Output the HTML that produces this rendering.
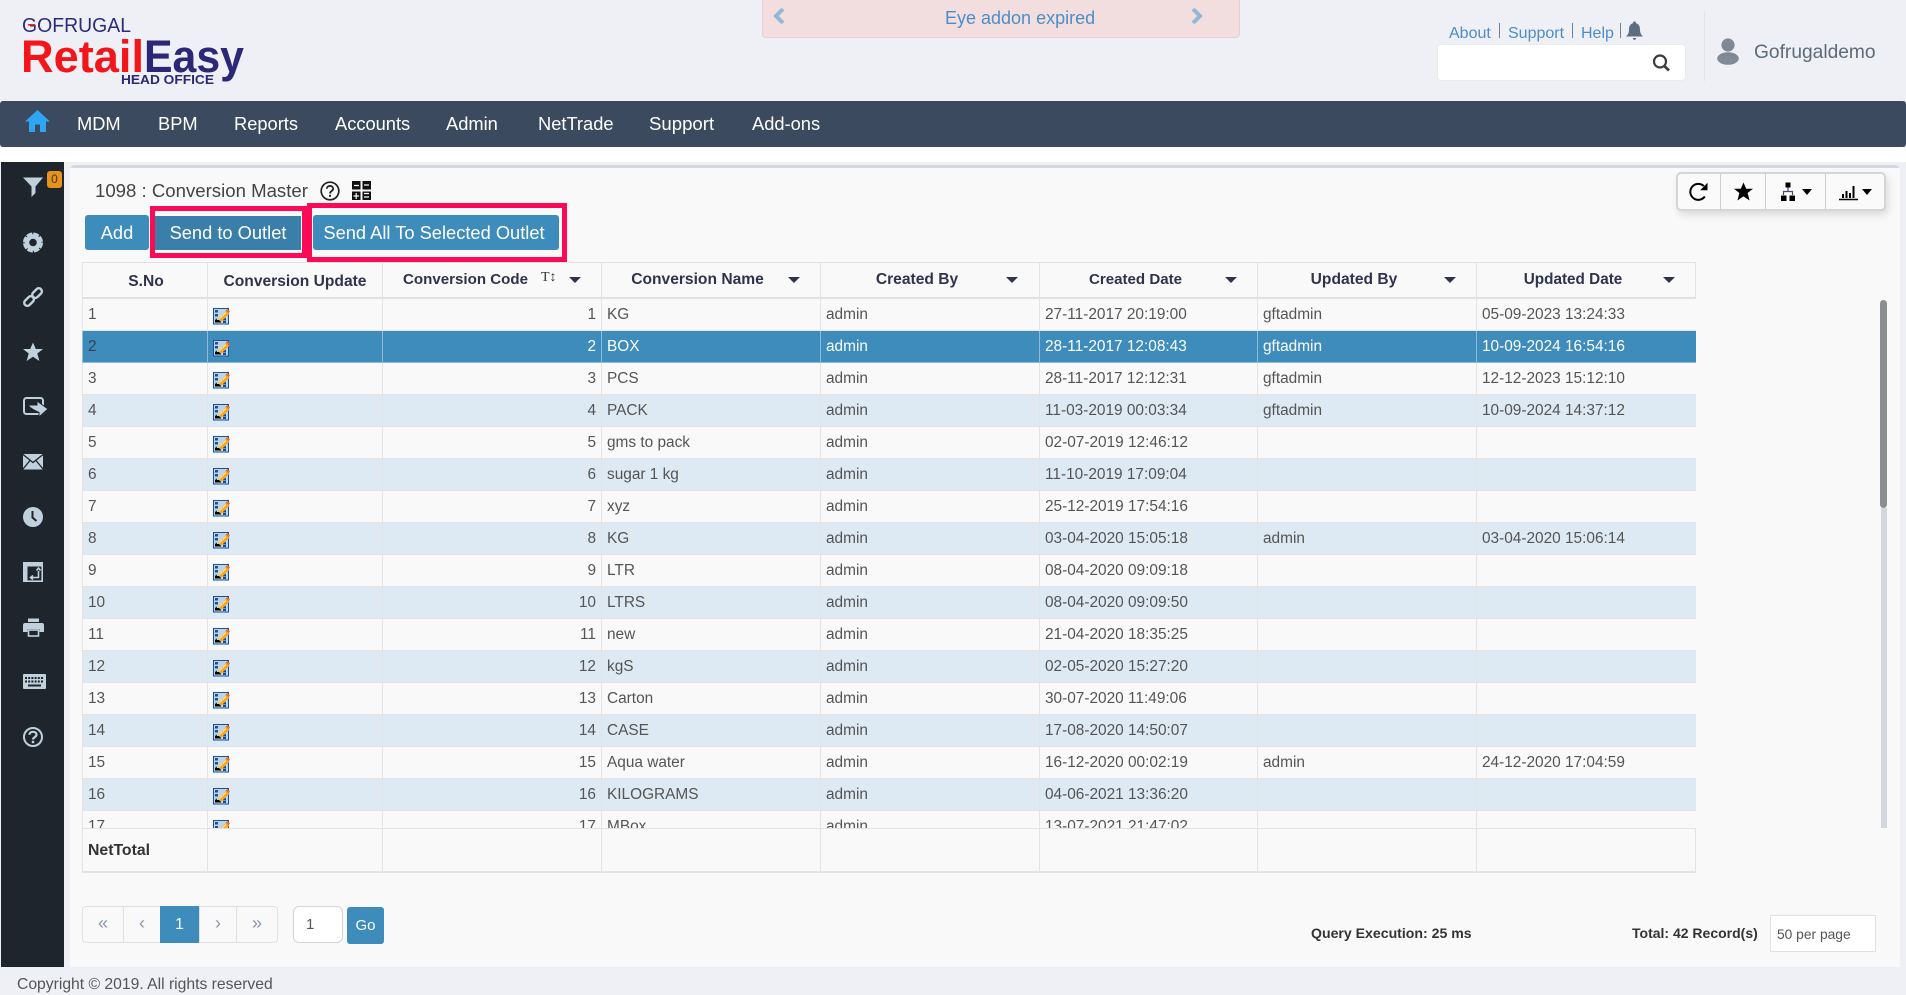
<!DOCTYPE html>
<html><head><meta charset="utf-8"><title>Conversion Master</title>
<style>
html,body{margin:0;padding:0;width:1906px;height:995px;overflow:hidden;background:#eff0f5;font-family:"Liberation Sans",sans-serif;color:#555}
.a{position:absolute}
.t{position:absolute;white-space:nowrap}
svg{position:absolute;display:block;overflow:visible}
.nav{left:0;top:101px;width:1906px;height:46px;background:#3c4a5f;border-radius:3px}
.m{top:101px;height:46px;line-height:46px;font-size:18.3px;color:#fff}
.btn{background:#3d8cbc;color:#fff;font-size:18.3px;text-align:center;border-radius:3px;top:215px;height:35px;line-height:36px}
.hl{border:5px solid #fb0a55;box-sizing:border-box}
.th{top:262px;height:36px;line-height:35px;font-size:15.6px;font-weight:bold;color:#30334c;text-align:center;white-space:nowrap}
.v{width:1px;background:#e3e3e3}
#wrap{left:82px;top:299px;width:1614px;height:529px;overflow:hidden}
table{border-collapse:collapse;table-layout:fixed;width:1614px}
td{height:30px;padding:1px 5px 0;border:1px solid #e4e4e4;border-top:0;font-size:15.4px;line-height:30px;white-space:nowrap;overflow:hidden;color:#555;box-sizing:content-box}
tr:nth-child(even) td{background:#dde9f3}
tr:nth-child(odd) td{background:#f9f9f9}
tr.s td{background:#3d8cbc;color:#fff;border-color:#8fbbd6}
tr.s td:first-child{color:#3b3f4a}
td.r{text-align:right}
td.i{padding:1px 0 0;position:relative}
.arr{width:0;height:0;border-left:6px solid transparent;border-right:6px solid transparent;border-top:6px solid #30334c;top:277px}
.pg{top:906px;height:37px;box-sizing:border-box;border:1px solid #e0e0e0;text-align:center;line-height:33px;font-size:18px;color:#8a97a6;background:#f9f9f9}
.ti{top:172px;height:39px}
.sb{left:23px;width:20px;height:20px}
</style></head><body>
<svg width="0" height="0" style="position:absolute"><defs>
<g id="e">
<rect x="0.5" y="0.5" width="15" height="15.5" fill="#bcd4ec" stroke="#1c4f93"/>
<rect x="2" y="2" width="3" height="2.5" fill="#1c4f93"/><rect x="2" y="6" width="3" height="2.5" fill="#1c4f93"/><rect x="10" y="10" width="3" height="2.5" fill="#1c4f93"/><rect x="10" y="13" width="3" height="2" fill="#1c4f93"/>
<path d="M3 10L5 14H2Z" fill="#000"/><rect x="2" y="12" width="6" height="2.5" fill="#000"/>
<path d="M5 11L13 3L16.5 5.5L8 14Z" fill="#f5a623"/><path d="M12.5 2.5L14.5 1L17 3.5L15.5 5Z" fill="#ee6a2f"/><path d="M6 11L13 4.5" stroke="#ffe28a" stroke-width="1.2"/>
</g>
</defs></svg>

<!-- logo -->
<svg class="a" style="left:0;top:0" width="260" height="100">
<text x="22" y="32" font-family="Liberation Sans" font-size="20.5" fill="#2f2a78" textLength="109" lengthAdjust="spacingAndGlyphs">GOFRUGAL</text>
<rect x="28" y="24" width="7" height="1.6" fill="#e8202a"/>
<text x="21" y="72" font-family="Liberation Sans" font-weight="bold" font-size="45" fill="#f2161b" textLength="123" lengthAdjust="spacingAndGlyphs">Retail</text>
<text x="144" y="72" font-family="Liberation Sans" font-weight="bold" font-size="45" fill="#2d2778" textLength="100" lengthAdjust="spacingAndGlyphs">Easy</text>
<text x="121" y="84" font-family="Liberation Sans" font-weight="bold" font-size="12.5" fill="#2d2778" textLength="93" lengthAdjust="spacingAndGlyphs">HEAD OFFICE</text>
</svg>

<!-- eye addon -->
<div class="a" style="left:762px;top:-4px;width:478px;height:42px;box-sizing:border-box;background:#f2dede;border:1px solid #ebccd1;border-radius:4px"></div>
<div class="t" style="left:945px;top:4px;height:28px;line-height:28px;width:150px;text-align:center;font-size:18px;color:#4d8dc8">Eye addon expired</div>
<svg style="left:772px;top:7px" width="14" height="18"><path d="M11 2L4 9L11 16" fill="none" stroke="#8fb8d9" stroke-width="4"/></svg>
<svg style="left:1190px;top:7px" width="14" height="18"><path d="M3 2L10 9L3 16" fill="none" stroke="#8fb8d9" stroke-width="4"/></svg>

<!-- top right -->
<div class="t" style="left:1449px;top:24px;font-size:16px;line-height:20px;color:#4d8dc8">About</div>
<div class="a" style="left:1499px;top:23px;width:1px;height:15px;background:#6d8296"></div>
<div class="t" style="left:1508px;top:24px;font-size:16px;line-height:20px;color:#4d8dc8">Support</div>
<div class="a" style="left:1572px;top:23px;width:1px;height:15px;background:#6d8296"></div>
<div class="t" style="left:1581px;top:24px;font-size:16px;line-height:20px;color:#4d8dc8">Help</div>
<div class="a" style="left:1620px;top:23px;width:1px;height:15px;background:#6d8296"></div>
<svg style="left:1626px;top:21px" width="17" height="20"><path d="M8.5 0.5C9.8 0.5 10 1.5 10 2.2C13 3 14 5.5 14 8.5C14 12 15 13.5 17 15.5H0C2 13.5 3 12 3 8.5C3 5.5 4 3 7 2.2C7 1.5 7.2 0.5 8.5 0.5ZM6.8 17H10.2C10 19.5 7 19.5 6.8 17Z" fill="#5c6f82"/></svg>
<div class="a" style="left:1437px;top:44px;width:249px;height:37px;box-sizing:border-box;background:#fff;border:1px solid #e9ebf0;border-radius:4px"></div>
<svg style="left:1652px;top:54px" width="20" height="18"><circle cx="8" cy="7.5" r="6" fill="none" stroke="#3a3d42" stroke-width="2.2"/><path d="M12.3 12L17 16.5" stroke="#3a3d42" stroke-width="2.8"/></svg>
<div class="a" style="left:1704px;top:12px;width:1px;height:69px;background:#e2e4ea"></div>
<svg style="left:1717px;top:37px" width="22" height="28"><circle cx="11" cy="8" r="6.6" fill="#808a96"/><ellipse cx="11" cy="21.5" rx="10.8" ry="6.3" fill="#808a96"/></svg>
<div class="t" style="left:1754px;top:40px;font-size:19.2px;line-height:25px;color:#5b6b7b">Gofrugaldemo</div>

<!-- nav -->
<div class="a nav"></div>
<svg style="left:25px;top:110px" width="25" height="23"><path d="M12.5 0L25 11.5H21V22H15V14.5H10V22H4V11.5H0Z" fill="#2ea6f4"/></svg>
<div class="t m" style="left:77px">MDM</div>
<div class="t m" style="left:158px">BPM</div>
<div class="t m" style="left:234px">Reports</div>
<div class="t m" style="left:335px">Accounts</div>
<div class="t m" style="left:446px">Admin</div>
<div class="t m" style="left:538px">NetTrade</div>
<div class="t m" style="left:649px;font-size:18.6px">Support</div>
<div class="t m" style="left:752px">Add-ons</div>

<!-- white band -->
<div class="a" style="left:0;top:147px;width:1906px;height:15px;background:#fff"></div>

<!-- sidebar -->
<div class="a" style="left:1px;top:162px;width:63px;height:805px;background:#1e252c"></div>
<div class="a" style="left:64px;top:162px;width:1842px;height:6px;background:#eef0f4"></div>
<div class="a" style="left:70px;top:165px;width:1830px;height:802px;background:#d4d8e0;border-radius:5px 5px 0 0"></div>
<div class="a" style="left:70px;top:168px;width:1830px;height:799px;background:#f9f9f9"></div>

<svg class="sb" style="top:177px" viewBox="0 0 20 20"><path d="M0 0.5H20L12.5 9.5V16L8.5 20V9.5Z" fill="#c0d0dc"/></svg>
<div class="a" style="left:47px;top:171px;width:15px;height:17px;background:#e6921e;border-radius:3px;color:#4a3410;font-size:12px;line-height:17px;text-align:center">0</div>
<svg class="sb" style="top:232px" viewBox="0 0 20 20"><circle cx="10" cy="10.5" r="6" fill="none" stroke="#c0d0dc" stroke-width="4.4"/><circle cx="10" cy="10.5" r="8.4" fill="none" stroke="#c0d0dc" stroke-width="3.2" stroke-dasharray="5.6 1"/></svg>
<svg class="sb" style="top:287px" viewBox="0 0 20 20"><g fill="none" stroke="#c0d0dc" stroke-width="2.4"><rect x="-5.5" y="-3" width="11" height="6.2" rx="3" transform="translate(14 6) rotate(-45)"/><rect x="-5.5" y="-3" width="11" height="6.2" rx="3" transform="translate(6 14) rotate(-45)"/></g></svg>
<svg class="sb" style="top:342px" viewBox="0 0 20 20"><path d="M10 0.5L12.8 7H20L14.3 11.5L16.4 19L10 14.8L3.6 19L5.7 11.5L0 7H7.2Z" fill="#c0d0dc"/></svg>
<svg class="sb" style="top:397px;width:25px" viewBox="0 0 25 20"><rect x="1" y="1" width="19" height="16" rx="2.5" fill="none" stroke="#c0d0dc" stroke-width="2"/><path d="M5 8H14V4L25 12L16 20V15.5C11 13 8 12 5 8Z" fill="#c0d0dc" stroke="#1e252c" stroke-width="1"/></svg>
<svg class="sb" style="top:452px" viewBox="0 0 20 20"><rect y="2" width="20" height="15.5" rx="1" fill="#c0d0dc"/><path d="M0 2.5L10 10.5L20 2.5M0 17L7 8.5M20 17L13 8.5" fill="none" stroke="#1e252c" stroke-width="1.3"/></svg>
<svg class="sb" style="top:507px" viewBox="0 0 20 20"><circle cx="10" cy="10" r="10" fill="#c0d0dc"/><path d="M9.5 4V10.5L13.5 14" fill="none" stroke="#1e252c" stroke-width="2"/></svg>
<svg class="sb" style="top:562px" viewBox="0 0 20 20"><rect x="0.8" y="0.8" width="18.4" height="18.4" fill="none" stroke="#c0d0dc" stroke-width="1.6"/><rect x="1" y="1" width="18" height="3.5" fill="#c0d0dc"/><rect x="1" y="4" width="3.5" height="15" fill="#c0d0dc"/><path d="M15.5 9V15.5H8M13.5 8.5L15.5 6L17.5 8.5M10 13.5L7.5 15.5L10 17.5" fill="none" stroke="#c0d0dc" stroke-width="1.6"/></svg>
<svg class="sb" style="top:617px;width:21px" viewBox="0 0 21 20"><rect x="5" y="1.5" width="11" height="3.5" fill="#c0d0dc"/><path d="M2 6H19Q21 6 21 8.5V15H16.5V12H4.5V15H0V8.5Q0 6 2 6Z" fill="#c0d0dc"/><rect x="5.5" y="13" width="10" height="6" fill="none" stroke="#c0d0dc" stroke-width="1.6"/></svg>
<svg class="sb" style="top:672px;width:23px" viewBox="0 0 23 20"><rect y="2" width="23" height="15" rx="1" fill="#c0d0dc"/><path d="M2 6H21M2 9.5H21" stroke="#1e252c" stroke-width="2" stroke-dasharray="2 1.2"/><path d="M5 13.5H18" stroke="#1e252c" stroke-width="2"/></svg>
<svg class="sb" style="top:727px" viewBox="0 0 20 20"><circle cx="10" cy="10" r="9" fill="none" stroke="#c0d0dc" stroke-width="2"/><path d="M6.5 7.8C6.5 3.8 13.5 3.8 13.5 7.8C13.5 10.3 10 10 10 12.5" fill="none" stroke="#c0d0dc" stroke-width="2.2"/><rect x="8.8" y="13.8" width="2.4" height="2.4" fill="#c0d0dc"/></svg>

<!-- title -->
<div class="t" style="left:95px;top:178px;font-size:18.6px;line-height:25px;color:#444">1098 : Conversion Master</div>
<svg style="left:320px;top:181px" width="20" height="20"><circle cx="10" cy="10" r="8.8" fill="none" stroke="#222" stroke-width="1.7"/><path d="M6.8 7.8C6.8 4 13.2 4 13.2 7.8C13.2 10 10 10 10 12.5" fill="none" stroke="#222" stroke-width="1.8"/><rect x="9" y="13.8" width="2" height="2" fill="#222"/></svg>
<svg style="left:352px;top:181px" width="19" height="19"><rect x="0" y="0" width="8.5" height="8.5" fill="#111"/><rect x="10.5" y="0" width="8.5" height="8.5" fill="#111"/><rect x="0" y="10.5" width="8.5" height="8.5" fill="#111"/><rect x="10.5" y="10.5" width="8.5" height="8.5" fill="#111"/><path d="M2 4.5H7M12 4H17M12 12.5H17M12 16H17M4.2 12V18M1.5 15H7" stroke="#fff" stroke-width="1.2"/></svg>

<!-- buttons -->
<div class="a btn" style="left:85px;width:64px">Add</div>
<div class="a hl" style="left:150px;top:206px;width:157px;height:52px"></div>
<div class="a btn" style="left:155px;width:146px;background:#3a7fa9;border-radius:0;border-top:1px solid #fff;height:34px;line-height:34px">Send to Outlet</div>
<div class="a hl" style="left:307px;top:203px;width:260px;height:59px"></div>
<div class="a btn" style="left:313px;width:246px;text-indent:-4px">Send All To Selected Outlet</div>

<!-- toolbar -->
<div class="a" style="left:1676px;top:172px;width:210px;height:39px;box-sizing:border-box;background:#fafafa;border:2px solid #d5d5d5;border-radius:5px;box-shadow:2px 4px 8px rgba(0,0,0,.12)"></div>
<div class="a" style="left:1720px;top:173px;width:1px;height:37px;background:#d0d0d0"></div>
<div class="a" style="left:1765px;top:173px;width:1px;height:37px;background:#d0d0d0"></div>
<div class="a" style="left:1825px;top:173px;width:1px;height:37px;background:#d0d0d0"></div>
<svg style="left:1689px;top:182px" width="20" height="20"><path d="M15.8 14.5A8 8 0 1 1 14.8 4" fill="none" stroke="#000" stroke-width="2"/><path d="M18.5 0.8V8.2H11.2Z" fill="#000"/></svg>
<svg style="left:1734px;top:182px" width="19" height="19"><path d="M9.5 0.5L12.2 6.8H19L13.6 11L15.6 18.5L9.5 14.4L3.4 18.5L5.4 11L0 6.8H6.8Z" fill="#000"/></svg>
<svg style="left:1781px;top:182px" width="14" height="20"><rect x="4.5" y="0.5" width="5" height="5" fill="#000"/><path d="M7 5.5V9M2.5 13V9.5H11.5V13" fill="none" stroke="#4b4b6b" stroke-width="1.2"/><rect x="0" y="13.5" width="5.5" height="5.5" fill="#000"/><rect x="8.5" y="13.5" width="5.5" height="5.5" fill="#000"/></svg>
<div class="a" style="left:1802px;top:189px;width:0;height:0;border-left:5.5px solid transparent;border-right:5.5px solid transparent;border-top:6px solid #000"></div>
<svg style="left:1839px;top:184px" width="19" height="17"><path d="M0 15.5H19" stroke="#000" stroke-width="1.6"/><rect x="3" y="10" width="2" height="4" fill="#000"/><rect x="6.5" y="7" width="2" height="7" fill="#000"/><rect x="10" y="9" width="2" height="5" fill="#000"/><rect x="13.5" y="2" width="2" height="12" fill="#000"/></svg>
<div class="a" style="left:1862px;top:189px;width:0;height:0;border-left:5.5px solid transparent;border-right:5.5px solid transparent;border-top:6px solid #000"></div>

<!-- table header -->
<div class="a" style="left:82px;top:262px;width:1614px;height:37px;box-sizing:border-box;border:1px solid #e3e3e3;border-bottom:2px solid #e0e0e0"></div>
<div class="a v" style="left:207px;top:262px;height:37px"></div>
<div class="a v" style="left:382px;top:262px;height:37px"></div>
<div class="a v" style="left:601px;top:262px;height:37px"></div>
<div class="a v" style="left:820px;top:262px;height:37px"></div>
<div class="a v" style="left:1039px;top:262px;height:37px"></div>
<div class="a v" style="left:1257px;top:262px;height:37px"></div>
<div class="a v" style="left:1476px;top:262px;height:37px"></div>
<div class="a th" style="left:83px;width:124px;top:264px;text-indent:2px">S.No</div>
<div class="a th" style="left:208px;width:174px;top:264px">Conversion Update</div>
<div class="a th" style="left:402px;width:127px;font-size:15.1px">Conversion Code</div>
<div class="a th" style="left:600px;width:195px">Conversion Name</div>
<div class="a th" style="left:820px;width:194px">Created By</div>
<div class="a th" style="left:1040px;width:191px;font-size:15.1px">Created Date</div>
<div class="a th" style="left:1258px;width:192px">Updated By</div>
<div class="a th" style="left:1477px;width:192px;font-size:15.3px">Updated Date</div>
<div class="t" style="left:541px;top:268px;font-size:14px;line-height:20px;font-family:'Liberation Serif',serif;color:#333">T↕</div>
<div class="a arr" style="left:569px"></div>
<div class="a arr" style="left:788px"></div>
<div class="a arr" style="left:1006px"></div>
<div class="a arr" style="left:1225px"></div>
<div class="a arr" style="left:1444px"></div>
<div class="a arr" style="left:1663px"></div>

<!-- table body -->
<div class="a" id="wrap">
<table>
<colgroup><col style="width:125px"><col style="width:175px"><col style="width:219px"><col style="width:219px"><col style="width:219px"><col style="width:218px"><col style="width:219px"><col style="width:220px"></colgroup>
<tr><td>1</td><td class="i"><svg style="left:5px;top:9px" width="17" height="17"><use href="#e"/></svg></td><td class="r">1</td><td>KG</td><td>admin</td><td>27-11-2017 20:19:00</td><td>gftadmin</td><td>05-09-2023 13:24:33</td></tr>
<tr class="s"><td>2</td><td class="i"><svg style="left:5px;top:9px" width="17" height="17"><use href="#e"/></svg></td><td class="r">2</td><td>BOX</td><td>admin</td><td>28-11-2017 12:08:43</td><td>gftadmin</td><td>10-09-2024 16:54:16</td></tr>
<tr><td>3</td><td class="i"><svg style="left:5px;top:9px" width="17" height="17"><use href="#e"/></svg></td><td class="r">3</td><td>PCS</td><td>admin</td><td>28-11-2017 12:12:31</td><td>gftadmin</td><td>12-12-2023 15:12:10</td></tr>
<tr><td>4</td><td class="i"><svg style="left:5px;top:9px" width="17" height="17"><use href="#e"/></svg></td><td class="r">4</td><td>PACK</td><td>admin</td><td>11-03-2019 00:03:34</td><td>gftadmin</td><td>10-09-2024 14:37:12</td></tr>
<tr><td>5</td><td class="i"><svg style="left:5px;top:9px" width="17" height="17"><use href="#e"/></svg></td><td class="r">5</td><td>gms to pack</td><td>admin</td><td>02-07-2019 12:46:12</td><td></td><td></td></tr>
<tr><td>6</td><td class="i"><svg style="left:5px;top:9px" width="17" height="17"><use href="#e"/></svg></td><td class="r">6</td><td>sugar 1 kg</td><td>admin</td><td>11-10-2019 17:09:04</td><td></td><td></td></tr>
<tr><td>7</td><td class="i"><svg style="left:5px;top:9px" width="17" height="17"><use href="#e"/></svg></td><td class="r">7</td><td>xyz</td><td>admin</td><td>25-12-2019 17:54:16</td><td></td><td></td></tr>
<tr><td>8</td><td class="i"><svg style="left:5px;top:9px" width="17" height="17"><use href="#e"/></svg></td><td class="r">8</td><td>KG</td><td>admin</td><td>03-04-2020 15:05:18</td><td>admin</td><td>03-04-2020 15:06:14</td></tr>
<tr><td>9</td><td class="i"><svg style="left:5px;top:9px" width="17" height="17"><use href="#e"/></svg></td><td class="r">9</td><td>LTR</td><td>admin</td><td>08-04-2020 09:09:18</td><td></td><td></td></tr>
<tr><td>10</td><td class="i"><svg style="left:5px;top:9px" width="17" height="17"><use href="#e"/></svg></td><td class="r">10</td><td>LTRS</td><td>admin</td><td>08-04-2020 09:09:50</td><td></td><td></td></tr>
<tr><td>11</td><td class="i"><svg style="left:5px;top:9px" width="17" height="17"><use href="#e"/></svg></td><td class="r">11</td><td>new</td><td>admin</td><td>21-04-2020 18:35:25</td><td></td><td></td></tr>
<tr><td>12</td><td class="i"><svg style="left:5px;top:9px" width="17" height="17"><use href="#e"/></svg></td><td class="r">12</td><td>kgS</td><td>admin</td><td>02-05-2020 15:27:20</td><td></td><td></td></tr>
<tr><td>13</td><td class="i"><svg style="left:5px;top:9px" width="17" height="17"><use href="#e"/></svg></td><td class="r">13</td><td>Carton</td><td>admin</td><td>30-07-2020 11:49:06</td><td></td><td></td></tr>
<tr><td>14</td><td class="i"><svg style="left:5px;top:9px" width="17" height="17"><use href="#e"/></svg></td><td class="r">14</td><td>CASE</td><td>admin</td><td>17-08-2020 14:50:07</td><td></td><td></td></tr>
<tr><td>15</td><td class="i"><svg style="left:5px;top:9px" width="17" height="17"><use href="#e"/></svg></td><td class="r">15</td><td>Aqua water</td><td>admin</td><td>16-12-2020 00:02:19</td><td>admin</td><td>24-12-2020 17:04:59</td></tr>
<tr><td>16</td><td class="i"><svg style="left:5px;top:9px" width="17" height="17"><use href="#e"/></svg></td><td class="r">16</td><td>KILOGRAMS</td><td>admin</td><td>04-06-2021 13:36:20</td><td></td><td></td></tr>
<tr><td>17</td><td class="i"><svg style="left:5px;top:9px" width="17" height="17"><use href="#e"/></svg></td><td class="r">17</td><td>MBox</td><td>admin</td><td>13-07-2021 21:47:02</td><td></td><td></td></tr>
</table>
</div>

<!-- table footer -->
<div class="a" style="left:82px;top:828px;width:1614px;height:45px;box-sizing:border-box;border:1px solid #e3e3e3;border-bottom:2px solid #e3e3e3;background:#f9f9f9"></div>
<div class="a v" style="left:207px;top:828px;height:45px"></div>
<div class="a v" style="left:382px;top:828px;height:45px"></div>
<div class="a v" style="left:601px;top:828px;height:45px"></div>
<div class="a v" style="left:820px;top:828px;height:45px"></div>
<div class="a v" style="left:1039px;top:828px;height:45px"></div>
<div class="a v" style="left:1257px;top:828px;height:45px"></div>
<div class="a v" style="left:1476px;top:828px;height:45px"></div>
<div class="t" style="left:88px;top:840px;font-size:15.8px;line-height:22px;font-weight:bold;color:#333">NetTotal</div>

<!-- scrollbar -->
<div class="a" style="left:1881px;top:508px;width:6px;height:320px;background:#d3d5df"></div>
<div class="a" style="left:1880px;top:300px;width:7px;height:208px;background:#8c8f92;border-radius:4px"></div>

<!-- pagination -->
<div class="a pg" style="left:82px;width:42px;border-radius:4px 0 0 4px">«</div>
<div class="a pg" style="left:123px;width:38px">‹</div>
<div class="a pg" style="left:160px;width:39px;background:#3d8cbc;border-color:#3d8cbc;color:#fff;font-size:16px;line-height:35px">1</div>
<div class="a pg" style="left:199px;width:38px">›</div>
<div class="a pg" style="left:236px;width:42px;border-radius:0 4px 4px 0">»</div>
<div class="a" style="left:293px;top:906px;width:50px;height:37px;box-sizing:border-box;background:#fff;border:1px solid #d5d5d5;border-radius:6px;font-size:15px;line-height:35px;padding-left:12px;color:#555">1</div>
<div class="a" style="left:347px;top:907px;width:37px;height:37px;background:#3d8cbc;border-radius:3px;color:#fff;font-size:15px;line-height:37px;text-align:center">Go</div>

<div class="t" style="left:1311px;top:923px;font-size:14.1px;line-height:20px;font-weight:bold;color:#333">Query Execution: 25 ms</div>
<div class="t" style="left:1632px;top:923px;font-size:14px;line-height:20px;font-weight:bold;color:#333">Total: 42 Record(s)</div>
<div class="a" style="left:1770px;top:915px;width:106px;height:37px;box-sizing:border-box;background:#fff;border:1px solid #e0e0e0;font-size:13.8px;line-height:37px;padding-left:6px;color:#555">50 per page</div>

<div class="t" style="left:17px;top:974px;font-size:15.7px;line-height:21px;color:#555">Copyright © 2019. All rights reserved</div>
</body></html>
